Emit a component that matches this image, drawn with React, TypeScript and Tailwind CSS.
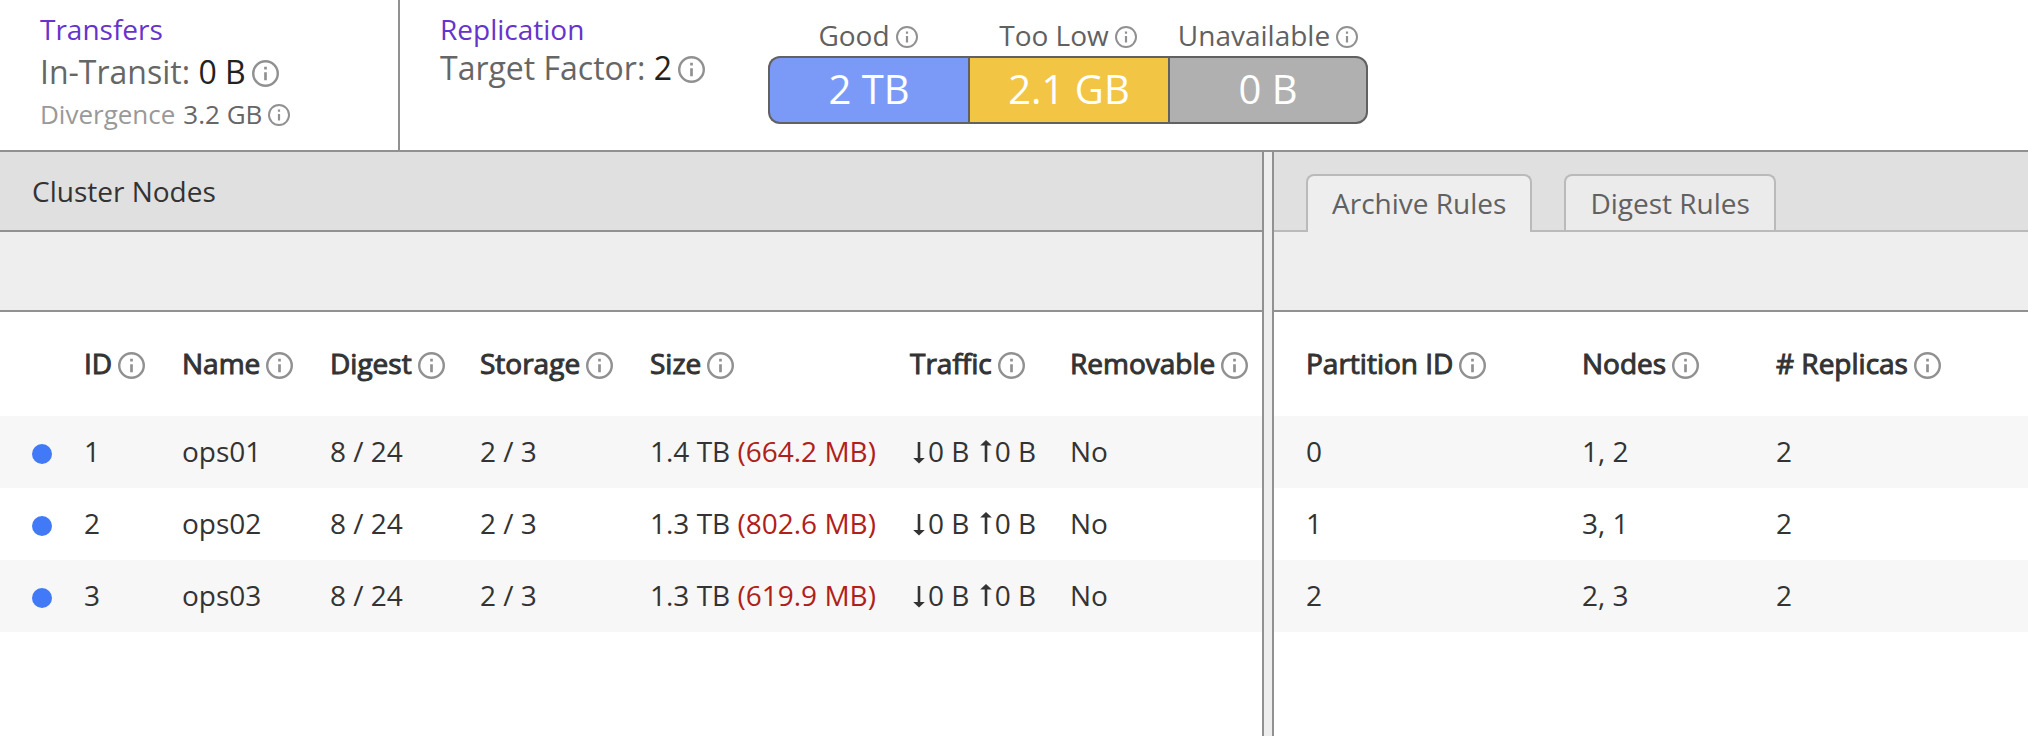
import type { ReactNode } from "react";

const iconSizes = {
  small: "ml-1.5 inline size-[22px] align-[-2px]",
  regular: "ml-1.5 inline size-[27px] align-[-3px]",
  heading: "ml-1.5 inline size-[27px] align-[-5px]",
};

function InfoIcon({ size = "regular" }: { size?: keyof typeof iconSizes }) {
  return (
    <svg viewBox="2 2 20 20" className={iconSizes[size]} fill="none" aria-hidden="true">
      <circle cx="12" cy="12" r="9.1" stroke="#919191" strokeWidth="1.8" />
      <path d="M11 7h2v2h-2zM11 11h2v6h-2z" fill="#919191" />
    </svg>
  );
}

function Heading({ children }: { children: ReactNode }) {
  return (
    <th className="h-[104px] p-0 pb-0.5 text-left font-normal">
      <span className="[-webkit-text-stroke:1px_#333333]">{children}</span>
      <InfoIcon size="heading" />
    </th>
  );
}

const nodes = [
  { id: 1, name: "ops01", size: "1.4 TB", diff: "(664.2 MB)" },
  { id: 2, name: "ops02", size: "1.3 TB", diff: "(802.6 MB)" },
  { id: 3, name: "ops03", size: "1.3 TB", diff: "(619.9 MB)" },
];

const partitions = [
  { id: 0, nodes: "1, 2", replicas: 2 },
  { id: 1, nodes: "3, 1", replicas: 2 },
  { id: 2, nodes: "2, 3", replicas: 2 },
];

const levels = [
  { label: "Good", value: "2 TB", cell: "rounded-l-xl border-r-0 bg-[#7b9af8]" },
  { label: "Too Low", value: "2.1 GB", cell: "border-r-0 bg-[#f3c544]" },
  { label: "Unavailable", value: "0 B", cell: "rounded-r-xl bg-[#b0b0b0]" },
];

function Arrow({ up = false }: { up?: boolean }) {
  return (
    <svg viewBox="0 0 18 24" className="inline h-6 w-[18px] align-[-2px]" aria-hidden="true">
      <path
        d={up ? "M7.700 22V5.500H3.200L9 0l5.800 5.500h-4.500V22z" : "M7.700 2v16H3.200L9 23.500l5.800-5.500h-4.500V2z"}
        fill="#333333"
      />
    </svg>
  );
}

export default function App() {
  return (
    <div className="flex min-h-screen flex-col bg-white font-['Open_Sans',sans-serif] text-[28px] leading-9 text-[#333333]">
      <header className="flex h-[152px] border-b-2 border-[#919191]">
        <section className="w-[400px] border-r-2 border-[#919191] pt-[11px] pl-10">
          <h2 className="text-[#6633cc]">Transfers</h2>
          <p className="pt-1 text-[32px] leading-[41px] text-[#666666]">
            In-Transit: <span className="text-[#222222]">0 B</span>
            <InfoIcon />
          </p>
          <p className="flex gap-2 text-[26px] leading-11 text-[#999999]">
            <span>Divergence</span>
            <span className="text-[#666666]">
              3.2 GB
              <InfoIcon size="small" />
            </span>
          </p>
        </section>
        <section className="flex pt-[11px] pl-10">
          <div className="w-[328px]">
            <h2 className="text-[#6633cc]">Replication</h2>
            <p className="text-[32px] leading-[41px] text-[#666666]">
              Target Factor: <span className="text-[#222222]">2</span>
              <InfoIcon />
            </p>
          </div>
          <dl className="flex pt-1.5">
            {levels.map((l) => (
              <div key={l.label} className="w-[200px]">
                <dt className="pb-[3px] text-center whitespace-nowrap text-[#616161]">
                  {l.label}
                  <InfoIcon size="small" />
                </dt>
                <dd
                  className={`flex h-[68px] items-center justify-center border-2 border-[#616161] pb-0.5 text-[40px] text-white ${l.cell}`}
                >
                  {l.value}
                </dd>
              </div>
            ))}
          </dl>
        </section>
      </header>

      <main className="flex grow">
        <section className="w-[1262px] shrink-0">
          <h2 className="flex h-20 items-center border-b-2 border-[#919191] bg-[#e0e0e0] pl-8">
            Cluster Nodes
          </h2>
          <div className="h-20 border-b-2 border-[#919191] bg-[#eeeeee]" />
          <table className="w-full table-fixed border-collapse whitespace-nowrap">
            <colgroup>
              <col className="w-[84px]" />
              <col className="w-[98px]" />
              <col className="w-[148px]" />
              <col className="w-[150px]" />
              <col className="w-[170px]" />
              <col className="w-[260px]" />
              <col className="w-[160px]" />
              <col />
            </colgroup>
            <thead>
              <tr>
                <td />
                <Heading>ID</Heading>
                <Heading>Name</Heading>
                <Heading>Digest</Heading>
                <Heading>Storage</Heading>
                <Heading>Size</Heading>
                <Heading>Traffic</Heading>
                <Heading>Removable</Heading>
              </tr>
            </thead>
            <tbody>
              {nodes.map((n) => (
                <tr key={n.id} className="h-[72px] odd:bg-[#f7f7f7]">
                  <td className="pt-1 pl-8">
                    <span className="block size-5 rounded-full bg-[#4179f7]" />
                  </td>
                  <td className="pb-0.5">{n.id}</td>
                  <td className="pb-0.5">{n.name}</td>
                  <td className="pb-0.5">8 / 24</td>
                  <td className="pb-0.5">2 / 3</td>
                  <td className="pb-0.5">
                    {n.size} <span className="text-[#b0201a]">{n.diff}</span>
                  </td>
                  <td className="pb-0.5">
                    <Arrow />0 B <Arrow up />0 B
                  </td>
                  <td className="pb-0.5">No</td>
                </tr>
              ))}
            </tbody>
          </table>
        </section>

        <div className="w-3 shrink-0 border-x-2 border-[#919191] bg-[#eeeeee]" />

        <section className="min-w-0 grow">
          <div className="flex h-20 bg-[#e0e0e0]">
            <div className="w-8 border-b-2 border-[#bababa]" />
            <div role="tablist" className="flex grow items-end">
              <button
                role="tab"
                aria-selected="true"
                className="h-[58px] rounded-t-lg border-2 border-b-0 border-[#bababa] bg-[#eeeeee] px-6 pb-0.5 text-[#616161]"
              >
                Archive Rules
              </button>
              <div className="w-8 self-stretch border-b-2 border-[#bababa]" />
              <div className="flex items-end self-stretch border-b-2 border-[#bababa]">
                <button
                  role="tab"
                  aria-selected="false"
                  className="h-14 rounded-t-lg border-2 border-b-0 border-[#bababa] bg-[#ebebeb] px-6 text-[#616161]"
                >
                  Digest Rules
                </button>
              </div>
              <div className="grow self-stretch border-b-2 border-[#bababa]" />
            </div>
          </div>
          <div className="h-20 border-b-2 border-[#919191] bg-[#eeeeee]" />
          <table className="w-full table-fixed border-collapse whitespace-nowrap">
            <colgroup>
              <col className="w-8" />
              <col className="w-[276px]" />
              <col className="w-[194px]" />
              <col />
            </colgroup>
            <thead>
              <tr>
                <td />
                <Heading>Partition ID</Heading>
                <Heading>Nodes</Heading>
                <Heading># Replicas</Heading>
              </tr>
            </thead>
            <tbody>
              {partitions.map((p) => (
                <tr key={p.id} className="h-[72px] odd:bg-[#f7f7f7]">
                  <td />
                  <td className="pb-0.5">{p.id}</td>
                  <td className="pb-0.5">{p.nodes}</td>
                  <td className="pb-0.5">{p.replicas}</td>
                </tr>
              ))}
            </tbody>
          </table>
        </section>
      </main>
    </div>
  );
}
